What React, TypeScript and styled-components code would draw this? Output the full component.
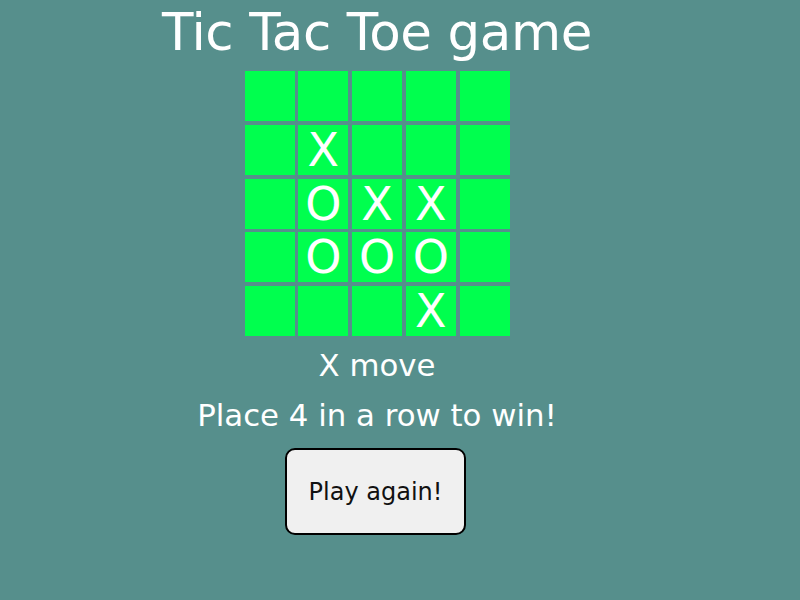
import React from "react";
import styled, { createGlobalStyle } from "styled-components";

const Global = createGlobalStyle`
  html, body {
    margin: 0;
    padding: 0;
    background: #568f8c;
    font-family: "DejaVu Sans", "Open Sans", sans-serif;
  }
  #root { width: 800px; height: 600px; }
`;

const Main = styled.main`
  width: 754px;
  display: flex;
  flex-direction: column;
  align-items: center;
  color: #ffffff;
`;

const Title = styled.h1`
  margin: 0;
  font-size: 51.5px;
  line-height: 64px;
  font-weight: 500;
  letter-spacing: -0.4px;
  white-space: nowrap;
`;

const Board = styled.div`
  margin-top: 7px;
  display: grid;
  grid-template-columns: repeat(5, 50px);
  grid-auto-rows: 50px;
  gap: 3.75px;
`;

const Cell = styled.div`
  background: #00ff4e;
  color: #ffffff;
  display: flex;
  align-items: center;
  justify-content: center;
  font-size: 46px;
  line-height: 1;
`;

const Status = styled.div<{ $gap: number }>`
  margin-top: ${(p) => p.$gap}px;
  font-size: 30.8px;
  line-height: 40px;
  white-space: nowrap;
`;

const Button = styled.button`
  margin-top: 13px;
  margin-right: 3px;
  width: 181px;
  height: 87px;
  border: 2px solid #000;
  border-radius: 10px;
  background: #f0f0f0;
  color: #111;
  font-family: inherit;
  font-size: 24px;
  cursor: pointer;
`;

const board = [
  "", "", "", "", "",
  "", "X", "", "", "",
  "", "O", "X", "X", "",
  "", "O", "O", "O", "",
  "", "", "", "X", "",
];

export default function App() {
  return (
    <>
      <Global />
      <Main>
        <Title>Tic Tac Toe game</Title>
        <Board>
          {board.map((v, i) => (
            <Cell key={i}>{v}</Cell>
          ))}
        </Board>
        <Status $gap={9}>X move</Status>
        <Status $gap={10}>Place 4 in a row to win!</Status>
        <Button>Play again!</Button>
      </Main>
    </>
  );
}
